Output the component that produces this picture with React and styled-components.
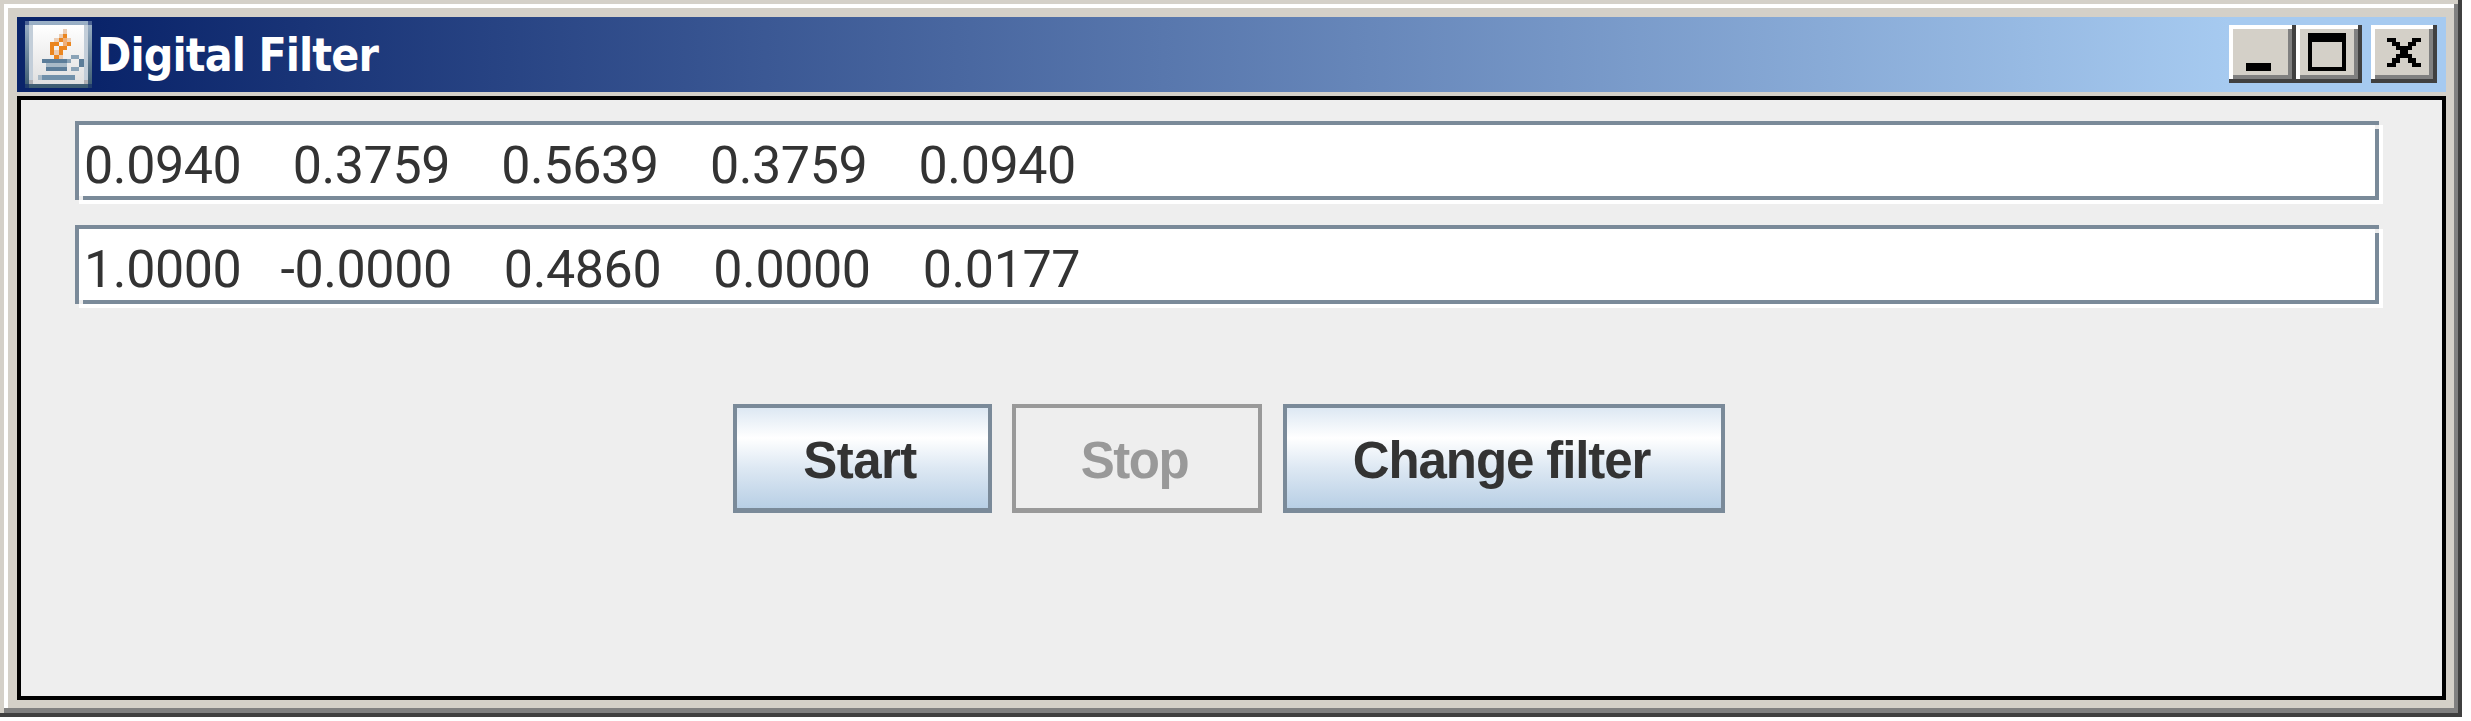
import React from 'react';
import styled, { createGlobalStyle, css } from 'styled-components';

const GlobalStyle = createGlobalStyle`
  *, *::before, *::after { box-sizing: border-box; }
  html, body { margin: 0; background: #fff; overflow: hidden; }
  button { font: inherit; margin: 0; padding: 0; }
`;

const Frame = styled.div`
  width: 2462px;
  height: 717px;
  padding: 17px 16px 17px 17px;
  display: flex;
  flex-direction: column;
  gap: 4px;
  background: #d4d0c8;
  box-shadow:
    inset -4px -4px #404040,
    inset 4px 4px #d4d0c8,
    inset -8px -9px #808080,
    inset 8px 8px #fff;
`;

const TitleBar = styled.header`
  height: 75px;
  flex: none;
  display: flex;
  align-items: center;
  padding: 0 9px 0 8px;
  background: linear-gradient(to right, #0a246a 80px, #a6caf0 2212px);
`;

const JavaIcon = styled.svg`
  width: 67px;
  height: 67px;
  flex: none;
  display: block;
`;

const Title = styled.h1`
  margin: 2px 0 0 5px;
  flex: 1;
  color: #fff;
  font: bold 46px/67px 'DejaVu Sans Condensed', 'DejaVu Sans', sans-serif;
  letter-spacing: -0.9px;
  white-space: pre;
`;

const Controls = styled.div`
  display: flex;
  height: 58px;
  margin-bottom: 1px;
`;

const ControlButton = styled.button`
  width: ${(p) => p.$width}px;
  height: 58px;
  margin-left: ${(p) => p.$gap || 0}px;
  border: 0;
  background: #d4d0c8;
  box-shadow:
    inset -4px -4px #404040,
    inset 4px 4px #fff,
    inset -8px -8px #808080;
`;

const Glyph = styled.svg`
  display: block;
  width: 100%;
  height: 58px;
`;

const Content = styled.main`
  flex: 1;
  border: 4px solid #000;
  background: #eee;
  padding: 21px 63px 0 54px;
  display: flex;
  flex-direction: column;
`;

const Field = styled.div`
  position: relative;
  height: 79px;
  margin-bottom: 25px;
  padding-left: 5px;
  border: 4px solid #7a8a99;
  background: #fff;
  box-shadow: 4px 4px #fff;
  color: #333;
  font: 52px/81px Roboto, sans-serif;
  letter-spacing: -0.4px;
  word-spacing: ${(p) => p.$wordGap}px;
  white-space: pre;

  /* light notches where the etched border meets its highlight */
  &::before, &::after {
    content: '';
    position: absolute;
    width: 4px;
    height: 4px;
    background: #eee;
  }
  &::before { left: 0; bottom: -4px; }
  &::after { right: -4px; top: 0; }
`;

const Actions = styled.div`
  display: flex;
  gap: 20px;
  margin: 75px 0 0 658px;
`;

const enabled = css`
  color: #333;
  border-color: #7a8a99;
  background: linear-gradient(#dde8f3 0%, #fff 30%, #dde8f3 60%, #b8cfe5 100%) padding-box;
`;

const disabled = css`
  color: #999;
  border-color: #999;
  background: #eee;
  margin-right: 1px;
`;

const ActionButton = styled.button`
  && {
    width: ${(p) => p.$width}px;
    height: 109px;
    flex: none;
    padding: 6px 5px 0 0;
    border-style: solid;
    border-width: 4px 4px 5px;
    font: bold 51px/94px 'Liberation Sans', Arial, sans-serif;
    letter-spacing: ${(p) => p.$tracking}px;
    white-space: nowrap;
    ${(p) => (p.disabled ? disabled : enabled)}
  }
`;

function CoffeeCup() {
  return (
    <JavaIcon viewBox="0 0 16 16" shapeRendering="crispEdges" aria-hidden="true">
      <defs>
        <linearGradient id="rim" x1="0" y1="0" x2="0" y2="1">
          <stop offset="0" stopColor="#9db2c8" />
          <stop offset="1" stopColor="#3b5a6f" />
        </linearGradient>
        <linearGradient id="paper" x1="0" y1="0" x2="0" y2="1">
          <stop offset="0" stopColor="#fff" />
          <stop offset="1" stopColor="#e0e0e0" />
        </linearGradient>
      </defs>
      <path fill="url(#rim)" d="M0 0h16v16H0z" />
      <path fill="url(#paper)" d="M1 1h14v14H1z" />
      <path fill="#4b6395" d="M0 0h1v1H0zM15 0h1v1h-1z" />
      <path fill="#213d6c" d="M0 15h1v1H0zM15 15h1v1h-1z" />
      <path fill="#c3ced9" d="M1 1h1v13H1zM14 1h1v13h-1z" />
      <path fill="#b0b0b4" d="M1 14h1v1H1zM14 14h1v1h-1z" />
      <path fill="#ebcdb4" d="M9 2h1v1H9zM8 3h1v1H8zM7 4h1v1H7zM10 4h1v1h-1zM7 7h1v1H7zM8 8h1v1H8z" />
      <path fill="#eb8620" d="M9 3h1v1H9zM8 4h1v1H8zM6 5h1v3H6zM7 5h1v1H7zM10 5h1v1h-1zM8 6h2v1H8zM8 7h1v1H8zM7 8h1v1H7z" />
      <path fill="#efb07a" d="M9 4h1v1H9zM9 5h1v1H9z" />
      <path fill="#5c7d99" d="M4 9h6v1H4zM5 11h5v1H5zM13 9h1v2h-1z" />
      <path fill="#8aa3b7" d="M10 9h1v1h-1zM11 8h2v1h-2zM11 11h2v1h-2z" />
      <path fill="#a9bac7" d="M5 10h5v1H5zM3 13h1v1H3z" />
      <path fill="#7090aa" d="M4 13h8v1H4z" />
    </JavaIcon>
  );
}

function MinimizeGlyph() {
  return (
    <Glyph viewBox="0 0 67 58" shapeRendering="crispEdges">
      <path d="M17 38h25v8H17z" />
    </Glyph>
  );
}

function MaximizeGlyph() {
  return (
    <Glyph viewBox="0 0 66 58" shapeRendering="crispEdges">
      <path fillRule="evenodd" d="M12 8h38v38H12zM16 17v25h30V17z" />
    </Glyph>
  );
}

function CloseGlyph() {
  return (
    <Glyph viewBox="0 0 66 58" shapeRendering="crispEdges">
      <path d="M16 13h9v4h-9zM41 13h9v4h-9zM21 17h8v4h-8zM37 17h8v4h-8zM25 21h16v4H25zM29 25h8v4h-8zM25 29h16v4H25zM21 33h8v5h-8zM37 33h8v5h-8zM16 38h9v4h-9zM41 38h9v4h-9z" />
    </Glyph>
  );
}

export default function App() {
  return (
    <>
      <GlobalStyle />
      <Frame>
        <TitleBar>
          <CoffeeCup />
          <Title>Digital Filter</Title>
          <Controls>
            <ControlButton $width={67} aria-label="Minimize"><MinimizeGlyph /></ControlButton>
            <ControlButton $width={66} aria-label="Maximize"><MaximizeGlyph /></ControlButton>
            <ControlButton $width={66} $gap={9} aria-label="Close"><CloseGlyph /></ControlButton>
          </Controls>
        </TitleBar>
        <Content>
          <Field $wordGap={0.3}>{'0.0940    0.3759    0.5639    0.3759    0.0940'}</Field>
          <Field $wordGap={0.5}>{'1.0000   -0.0000    0.4860    0.0000    0.0177'}</Field>
          <Actions>
            <ActionButton $width={259} $tracking={-0.5}>Start</ActionButton>
            <ActionButton $width={250} $tracking={-1.5} disabled>Stop</ActionButton>
            <ActionButton $width={442} $tracking={-1.1}>Change filter</ActionButton>
          </Actions>
        </Content>
      </Frame>
    </>
  );
}
